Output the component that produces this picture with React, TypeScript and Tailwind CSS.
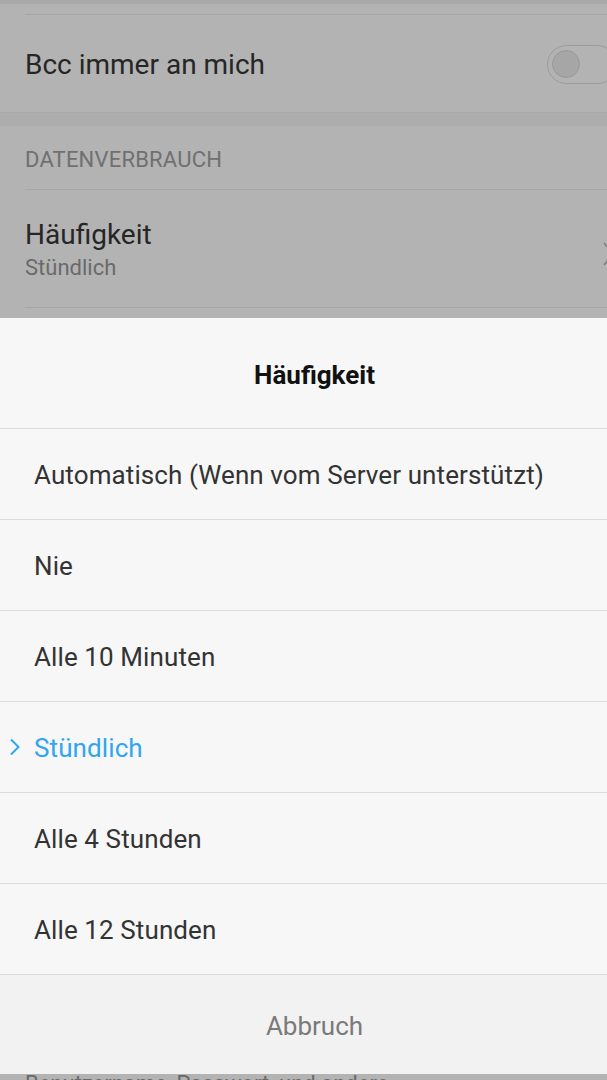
import React from "react";

const options = [
  "Automatisch (Wenn vom Server unterstützt)",
  "Nie",
  "Alle 10 Minuten",
  "Stündlich",
  "Alle 4 Stunden",
  "Alle 12 Stunden",
];

export default function App() {
  return (
    <div
      className="relative w-[607px] h-[1080px] overflow-hidden bg-[#b3b3b3]"
      style={{ fontFamily: "Roboto, 'Noto Sans', sans-serif" }}
    >
      {/* background settings page (dimmed) */}
      <div className="h-[4px] bg-[#a9a9a9]" />
      <div className="h-[10px]" />
      <div className="ml-[25px] border-t border-[#a6a6a6]" />
      <div className="h-[97px] flex items-center justify-between pl-[25px]">
        <span className="text-[28px] text-[#262626] pt-[3px]">Bcc immer an mich</span>
        <div className="w-[70px] h-[39px] rounded-full border border-[#9c9c9c] mr-[-10px] flex items-center pl-[4px] mt-[1px]">
          <div className="w-[28px] h-[28px] rounded-full bg-[#a6a6a6] border border-[#9a9a9a]" />
        </div>
      </div>
      <div className="border-t border-[#a9a9a9]" />
      <div className="h-[13px] bg-[#adadad]" />
      <div className="h-[63px] flex items-center pl-[25px] pt-[3px]">
        <span className="text-[22px] tracking-[0.2px] text-[#707070]">DATENVERBRAUCH</span>
      </div>
      <div className="ml-[25px] border-t border-[#a6a6a6]" />
      <div className="h-[117px] flex items-center justify-between pl-[25px]">
        <div className="flex flex-col pt-[5px]">
          <span className="text-[28px] leading-[34px] text-[#262626]">Häufigkeit</span>
          <span className="text-[22px] leading-[32px] text-[#6a6a6a]">Stündlich</span>
        </div>
        <svg width="12" height="24" viewBox="0 0 12 24" className="mr-[-8px] mt-[10px]">
          <path d="M1 1 L10 12 L1 23" fill="none" stroke="#7a7a7a" strokeWidth="1.5" />
        </svg>
      </div>
      <div className="ml-[25px] border-t border-[#a6a6a6]" />
      <div className="h-[760px]" />
      <div className="pl-[25px]">
        <span className="text-[22px] leading-[32px] text-[#6a6a6a]">Benutzername, Passwort, und andere</span>
      </div>

      {/* bottom sheet */}
      <div className="absolute left-0 right-0 top-[318px] h-[756px] flex flex-col bg-[#f7f7f7]">
        <div className="h-[111px] flex items-center justify-center border-b border-[#dcdcdc] pt-[4px] pl-[22px]">
          <span className="text-[26px] font-bold text-[#111]">Häufigkeit</span>
        </div>
        {options.map((o) => {
          const sel = o === "Stündlich";
          return (
            <div
              key={o}
              className="relative h-[91px] flex items-center pl-[34px] border-b border-[#dcdcdc] pt-[3px]"
            >
              {sel && (
                <svg
                  width="12"
                  height="18"
                  viewBox="0 0 12 18"
                  className="absolute left-[9px] top-[36px]"
                >
                  <path d="M2 1.5 L9.5 9 L2 16.5" fill="none" stroke="#30a5f2" strokeWidth="2" />
                </svg>
              )}
              <span
                className={`text-[26px] tracking-[0.1px] ${sel ? "text-[#30a5f2]" : "text-[#333333]"}`}
              >
                {o}
              </span>
            </div>
          );
        })}
        <div className="flex-1 flex items-center justify-center bg-[#f2f2f2] pt-[4px] pl-[22px]">
          <span className="text-[26px] text-[#7a7a7a]">Abbruch</span>
        </div>
      </div>
    </div>
  );
}
